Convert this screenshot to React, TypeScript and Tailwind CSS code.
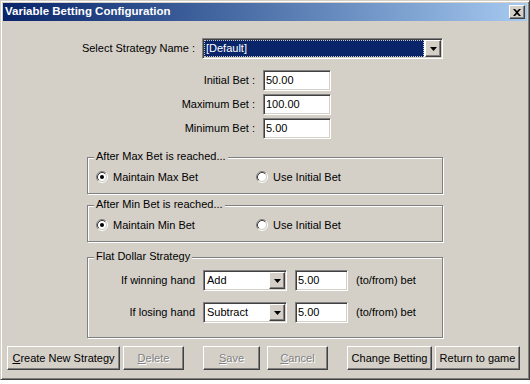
const sunken =
  "border border-t-[#808080] border-l-[#808080] border-b-white border-r-white shadow-[inset_1px_1px_0_#404040,inset_-1px_-1px_0_#d4d0c8]";
const raised =
  "border border-t-white border-l-white border-b-[#404040] border-r-[#404040] shadow-[inset_-1px_-1px_0_#808080,inset_1px_1px_0_#d4d0c8]";
const etched = "border border-[#808080] shadow-[inset_1px_1px_0_#fff,1px_1px_0_#fff]";

const Arrow = () => (
  <svg width="7" height="4" viewBox="0 0 7 4">
    <path d="M0 0h7L3.5 4z" fill="#000" />
  </svg>
);

const DropBtn = () => (
  <div className={`${raised} w-[16px] h-full bg-[#d4d0c8] flex items-center justify-center`}>
    <Arrow />
  </div>
);

const Combo = ({ value, width, selected }: { value: string; width: string; selected?: boolean }) => (
  <div className={`${sunken} ${width} h-[21px] bg-white flex p-[1px]`}>
    <div className="flex-1 flex items-center pr-[1px]">
      {selected ? (
        <div className="w-full h-full bg-[#0a246a] text-white border border-dotted border-[#c8c8c8] flex items-center pl-[1px]">
          {value}
        </div>
      ) : (
        <span className="pl-[2px]">{value}</span>
      )}
    </div>
    <DropBtn />
  </div>
);

const Field = ({ value, width }: { value: string; width: string }) => (
  <div className={`${sunken} ${width} h-[21px] bg-white flex items-center pl-[2px]`}>{value}</div>
);

const Radio = ({ on }: { on?: boolean }) => (
  <svg width="12" height="12" viewBox="0 0 12 12">
    <circle cx="6" cy="6" r="4" fill="#fff" />
    <path d="M2.11 9.89A5.5 5.5 0 0 1 9.89 2.11" stroke="#808080" fill="none" />
    <path d="M9.89 2.11A5.5 5.5 0 0 1 2.11 9.89" stroke="#fff" fill="none" />
    <path d="M2.82 9.18A4.5 4.5 0 0 1 9.18 2.82" stroke="#404040" fill="none" />
    <path d="M9.18 2.82A4.5 4.5 0 0 1 2.82 9.18" stroke="#d4d0c8" fill="none" />
    {on && <circle cx="6" cy="6" r="2" fill="#000" />}
  </svg>
);

const Group = ({ title, className, children }: { title: string; className: string; children: React.ReactNode }) => (
  <div className={`${etched} relative ml-[84px] w-[356px] ${className}`}>
    <span className="absolute left-[6px] top-[-8px] px-[2px] bg-[#d4d0c8] leading-[13px]">{title}</span>
    {children}
  </div>
);

const RadioRow = ({ first }: { first: string }) => (
  <div className="flex items-center pl-[8px] pt-[13px] h-[25px]">
    <div className="w-[160px] flex items-center gap-[5px]">
      <Radio on />
      <span>{first}</span>
    </div>
    <div className="flex items-center gap-[5px]">
      <Radio />
      <span>Use Initial Bet</span>
    </div>
  </div>
);

const Btn = ({ label, u, width, disabled, className = "" }: { label: string; u?: boolean; width: string; disabled?: boolean; className?: string }) => (
  <button
    className={`${raised} ${width} h-[24px] bg-[#d4d0c8] flex items-center justify-center ${
      disabled ? "text-[#808080] [text-shadow:1px_1px_0_#fff]" : "text-black"
    } ${className}`}
  >
    {u ? (
      <span>
        <span className="underline underline-offset-1">{label[0]}</span>
        {label.slice(1)}
      </span>
    ) : (
      label
    )}
  </button>
);

const App = () => {
  return (
    <div className="w-[530px] h-[384px] bg-white font-['Liberation_Sans',Arial,sans-serif] text-[11px] text-black">
      <div className="w-[530px] h-[380px] bg-[#d4d0c8] border border-t-[#d4d0c8] border-l-[#d4d0c8] border-b-[#404040] border-r-[#404040] shadow-[inset_1px_1px_0_#fff,inset_-1px_-1px_0_#808080] p-[2px] flex flex-col">
        <div className="h-[18px] flex items-center bg-gradient-to-r from-[#0a246a] to-[#a6caf0] pl-[2px] pr-[2px]">
          <span className="flex-1 text-white font-bold text-[11.5px]">Variable Betting Configuration</span>
          <div className={`${raised} w-[16px] h-[14px] bg-[#d4d0c8] flex items-center justify-center`}>
            <svg width="8" height="7" viewBox="0 0 8 7">
              <path d="M0 0h2l2 2 2-2h2L5 3.5 8 7H6L4 5 2 7H0l3-3.5z" fill="#000" />
            </svg>
          </div>
        </div>

        <div className="flex items-center mt-[17px]">
          <span className="w-[192px] text-right">Select Strategy Name :</span>
          <div className="ml-[7px]">
            <Combo value="[Default]" width="w-[241px]" selected />
          </div>
        </div>

        <div className="flex flex-col gap-[3px] mt-[11px]">
          {[
            ["Initial Bet :", "50.00"],
            ["Maximum Bet :", "100.00"],
            ["Minimum Bet :", "5.00"],
          ].map(([l, v]) => (
            <div key={l} className="flex items-center">
              <span className="w-[252px] text-right">{l}</span>
              <div className="ml-[8px]">
                <Field value={v} width="w-[68px]" />
              </div>
            </div>
          ))}
        </div>

        <Group title="After Max Bet is reached..." className="mt-[18px] h-[37px]">
          <RadioRow first="Maintain Max Bet" />
        </Group>

        <Group title="After Min Bet is reached..." className="mt-[11px] h-[37px]">
          <RadioRow first="Maintain Min Bet" />
        </Group>

        <Group title="Flat Dollar Strategy" className="mt-[15px] h-[81px] pt-[12px] flex flex-col gap-[11px]">
          {[
            ["If winning hand", "Add"],
            ["If losing hand", "Subtract"],
          ].map(([l, v]) => (
            <div key={l} className="flex items-center">
              <span className="w-[107px] text-right">{l}</span>
              <div className="ml-[8px]">
                <Combo value={v} width="w-[84px]" />
              </div>
              <div className="ml-[8px]">
                <Field value="5.00" width="w-[53px]" />
              </div>
              <span className="ml-[8px]">(to/from) bet</span>
            </div>
          ))}
        </Group>

        <div className="flex mt-[8px] ml-[4px]">
          <Btn label="Create New Strategy" u width="w-[113px]" />
          <Btn label="Delete" u disabled width="w-[61px]" className="ml-[3px]" />
          <Btn label="Save" u disabled width="w-[57px]" className="ml-[19px]" />
          <Btn label="Cancel" u disabled width="w-[61px]" className="ml-[7px]" />
          <Btn label="Change Betting" width="w-[85px]" className="ml-[19px]" />
          <Btn label="Return to game" width="w-[85px]" className="ml-[3px]" />
        </div>
      </div>
    </div>
  );
};

export default App;
